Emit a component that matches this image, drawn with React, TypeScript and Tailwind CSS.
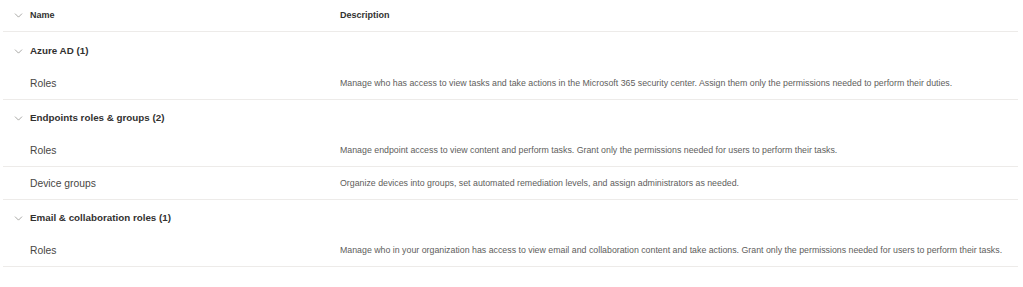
import { ChevronDown } from "lucide-react";

interface Item {
  name: string,
  description: string,
}

interface Group {
  title: string,
  items: Item[],
}

const groups: Group[] = [
  {
    title: "Azure AD (1)",
    items: [
      { name: "Roles", description: "Manage who has access to view tasks and take actions in the Microsoft 365 security center. Assign them only the permissions needed to perform their duties." },
    ],
  },
  {
    title: "Endpoints roles & groups (2)",
    items: [
      { name: "Roles", description: "Manage endpoint access to view content and perform tasks. Grant only the permissions needed for users to perform their tasks." },
      { name: "Device groups", description: "Organize devices into groups, set automated remediation levels, and assign administrators as needed." },
    ],
  },
  {
    title: "Email & collaboration roles (1)",
    items: [
      { name: "Roles", description: "Manage who in your organization has access to view email and collaboration content and take actions. Grant only the permissions needed for users to perform their tasks." },
    ],
  },
];

export default function App() {
  return (
    <div className="w-[1023px] h-[287px] bg-white pl-[3px] pr-[5px] font-['Liberation_Sans',sans-serif] text-[#323130]">
      <div className="flex items-center h-[32px] mb-[1px] border-b border-[#edebe9]">
        <div className="w-[27px] flex justify-center pl-[4px]">
          <ChevronDown className="w-[13px] h-[13px] text-[#605e5c]" strokeWidth={1} />
        </div>
        <div className="w-[310px] text-[9px] font-semibold">Name</div>
        <div className="text-[9px] font-semibold">Description</div>
      </div>

      {groups.map((g) => (
        <div key={g.title}>
          <div className="flex items-center h-[34px] pt-[2px]">
            <div className="w-[27px] flex justify-center pl-[4px]">
              <ChevronDown className="w-[13px] h-[13px] text-[#605e5c]" strokeWidth={1} />
            </div>
            <div className="text-[9.8px] font-semibold">{g.title}</div>
          </div>
          {g.items.map((it) => (
            <div key={it.name} className="flex items-center h-[33px] border-b border-[#edebe9] pt-[1px]">
              <div className="w-[337px] pl-[27px] text-[10.3px] text-[#484644]">{it.name}</div>
              <div className="text-[8.8px] text-[#605e5c]">{it.description}</div>
            </div>
          ))}
        </div>
      ))}
    </div>
  )
}
